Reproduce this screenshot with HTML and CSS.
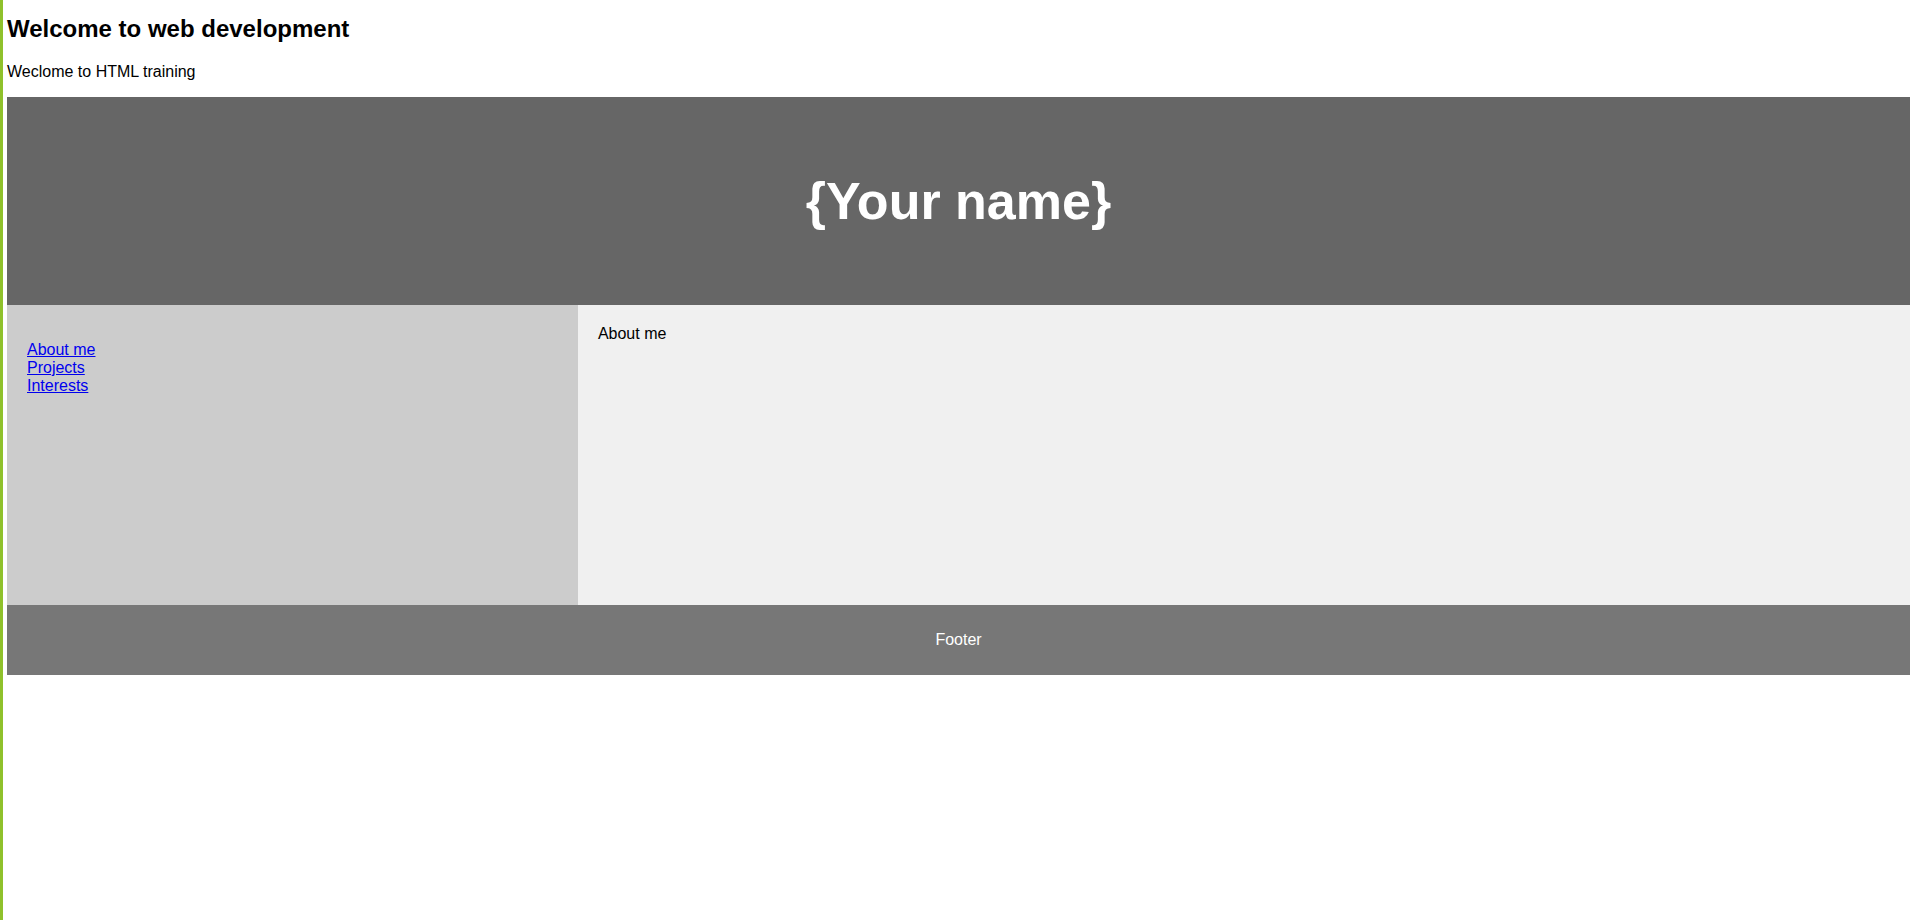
FILE: index.html
```html
<!DOCTYPE html>
<html lang="en">
<head>
<meta charset="utf-8">
<title>Welcome to web development</title>
<link rel="stylesheet" href="styles.css">
</head>
<body>
<h2 class="title">Welcome to web development</h2>
<p class="intro">Weclome to HTML training</p>
<div class="page">
  <header class="banner">
    <h1 class="name">{Your name}</h1>
  </header>
  <nav class="sidebar">
    <div class="links">
      <a href="#about">About me</a>
      <a href="#projects">Projects</a>
      <a href="#interests">Interests</a>
    </div>
  </nav>
  <main class="content">About me</main>
  <footer class="footer">Footer</footer>
</div>
</body>
</html>
```

FILE: styles.css
```css
html, body {
  height: 100%;
}
body {
  margin: 0;
  border-left: 3px solid #8fc12b;
  padding-left: 4px;
  font-family: "Liberation Sans", Arial, sans-serif;
  font-size: 16px;
  color: #000;
  background: #fff;
  box-sizing: border-box;
  overflow: hidden;
}
.title {
  font-size: 24px;
  margin: 15px 0 20px;
}
.intro {
  margin: 0 0 16px;
}
.page {
  display: grid;
  grid-template-columns: 3fr 7fr;
  grid-template-rows: 208px 300px 70px;
}
.banner {
  grid-column: 1 / -1;
  background: #666666;
  display: flex;
  align-items: center;
  justify-content: center;
}
.name {
  margin: 0;
  color: #fff;
  font-size: 52px;
}
.sidebar {
  background: #cccccc;
  padding: 36px 20px 20px;
}
.links a {
  display: block;
  color: #0000ee;
  text-decoration: underline;
}
.content {
  background: #f0f0f0;
  padding: 20px;
}
.footer {
  grid-column: 1 / -1;
  background: #777777;
  color: #fff;
  display: flex;
  align-items: center;
  justify-content: center;
}
```
